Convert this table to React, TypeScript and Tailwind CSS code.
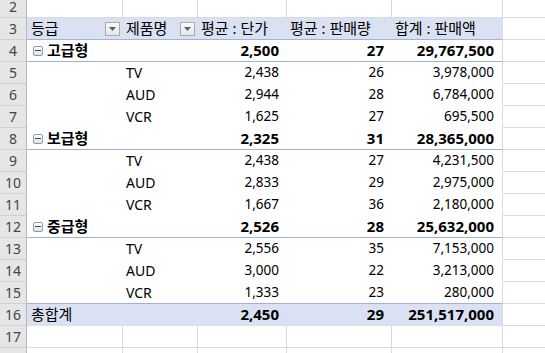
import React from "react";

type Row = {
  n: number;
  t: "blank" | "header" | "group" | "item" | "total";
  a?: string;
  b?: string;
  c?: string;
  d?: string;
  e?: string;
  line?: boolean;
};

const rows: Row[] = [
  { n: 2, t: "blank" },
  { n: 3, t: "header" },
  { n: 4, t: "group", a: "고급형", c: "2,500", d: "27", e: "29,767,500" },
  { n: 5, t: "item", b: "TV", c: "2,438", d: "26", e: "3,978,000" },
  { n: 6, t: "item", b: "AUD", c: "2,944", d: "28", e: "6,784,000" },
  { n: 7, t: "item", b: "VCR", c: "1,625", d: "27", e: "695,500" },
  { n: 8, t: "group", a: "보급형", c: "2,325", d: "31", e: "28,365,000" },
  { n: 9, t: "item", b: "TV", c: "2,438", d: "27", e: "4,231,500" },
  { n: 10, t: "item", b: "AUD", c: "2,833", d: "29", e: "2,975,000" },
  { n: 11, t: "item", b: "VCR", c: "1,667", d: "36", e: "2,180,000" },
  { n: 12, t: "group", a: "중급형", c: "2,526", d: "28", e: "25,632,000" },
  { n: 13, t: "item", b: "TV", c: "2,556", d: "35", e: "7,153,000" },
  { n: 14, t: "item", b: "AUD", c: "3,000", d: "22", e: "3,213,000" },
  { n: 15, t: "item", b: "VCR", c: "1,333", d: "23", e: "280,000", line: true },
  { n: 16, t: "total", a: "총합계", c: "2,450", d: "29", e: "251,517,000" },
  { n: 17, t: "blank" },
  { n: 18, t: "blank" },
];

function Dropdown() {
  return (
    <span className="ml-auto mr-[3px] flex h-[14px] w-[15px] shrink-0 items-center justify-center border border-[#ABABAB] bg-gradient-to-b from-[#FAFAFA] to-[#E6E6E6]">
      <svg width="7" height="4" viewBox="0 0 7 4">
        <path d="M0 0H7L3.5 4Z" fill="#5F5F5F" />
      </svg>
    </span>
  );
}

function Minus() {
  return (
    <span className="flex h-[10px] w-[10px] shrink-0 items-center justify-center rounded-[2px] border border-[#8C9BB0] bg-gradient-to-b from-[#FFFFFF] to-[#DCE2EA]">
      <span className="h-[1px] w-[6px] bg-[#3C4656]" />
    </span>
  );
}

function SheetRow({ r }: { r: Row }) {
  const rh = (
    <div className="flex h-full w-[27px] shrink-0 items-center justify-center border-b border-r border-b-[#D0D0D0] border-r-[#B8B8B8] bg-[#E6E6E6] text-[14px] text-[#444444]">
      {r.n}
    </div>
  );
  const fCell = <div className="h-full flex-1 border-b border-[#DADADA]" />;

  if (r.t === "blank") {
    return (
      <div className="flex h-[22px]">
        {rh}
        <div className="h-full w-[96px] shrink-0 border-b border-r border-[#DADADA]" />
        <div className="h-full w-[75px] shrink-0 border-b border-r border-[#DADADA]" />
        <div className="h-full w-[89px] shrink-0 border-b border-r border-[#DADADA]" />
        <div className="h-full w-[105px] shrink-0 border-b border-r border-[#DADADA]" />
        <div className="h-full w-[111px] shrink-0 border-b border-r border-[#DADADA]" />
        {fCell}
      </div>
    );
  }

  if (r.t === "header") {
    const cls = "flex h-full shrink-0 items-center border-b border-b-[#9BB4DE] bg-[#D9E1F2] text-[15px] text-black";
    return (
      <div className="flex h-[22px]">
        {rh}
        <div className={`${cls} w-[96px] pl-[4px]`}>
          <span>등급</span>
          <Dropdown />
        </div>
        <div className={`${cls} w-[75px] pl-[3px]`}>
          <span>제품명</span>
          <Dropdown />
        </div>
        <div className={`${cls} w-[89px] pl-[3px]`}>평균 : 단가</div>
        <div className={`${cls} w-[105px] pl-[3px]`}>평균 : 판매량</div>
        <div className={`${cls} w-[111px] pl-[3px] border-r border-r-[#DADADA]`}>합계 : 판매액</div>
        {fCell}
      </div>
    );
  }

  const isTotal = r.t === "total";
  const lined = r.t === "group" || r.line;
  const bcol = lined ? "border-b-[#9BB4DE]" : isTotal ? "border-b-[#D9E1F2]" : "border-b-white";
  const bg = isTotal ? "bg-[#D9E1F2]" : "bg-white";
  const base = `flex h-full shrink-0 items-center border-b ${bcol} ${bg} text-black`;
  const bold = r.t === "group" || isTotal;
  const num = bold ? "text-[15px] font-bold" : "text-[13.5px]";

  return (
    <div className="flex h-[22px]">
      {rh}
      <div className={`${base} w-[96px] ${r.t === "group" ? "pl-[6px] gap-[4px]" : "pl-[4px]"}`}>
        {r.t === "group" && <Minus />}
        {r.a && <span className={r.t === "group" ? "text-[15px] font-bold" : "text-[15px]"}>{r.a}</span>}
      </div>
      <div className={`${base} w-[75px] pl-[3px] text-[14px]`}>{r.b}</div>
      <div className={`${base} w-[89px] justify-end pr-[8px] ${num}`}>{r.c}</div>
      <div className={`${base} w-[105px] justify-end pr-[8px] ${num}`}>{r.d}</div>
      <div className={`${base} w-[111px] justify-end pr-[8px] ${num} border-r border-r-[#DADADA]`}>{r.e}</div>
      {fCell}
    </div>
  );
}

export default function App() {
  return (
    <div className="h-[353px] w-[545px] overflow-hidden bg-white font-['Noto_Sans','Noto_Sans_CJK_KR',sans-serif] leading-none">
      <div className="-mt-[4px]">
        {rows.map((r) => (
          <SheetRow key={r.n} r={r} />
        ))}
      </div>
    </div>
  );
}
